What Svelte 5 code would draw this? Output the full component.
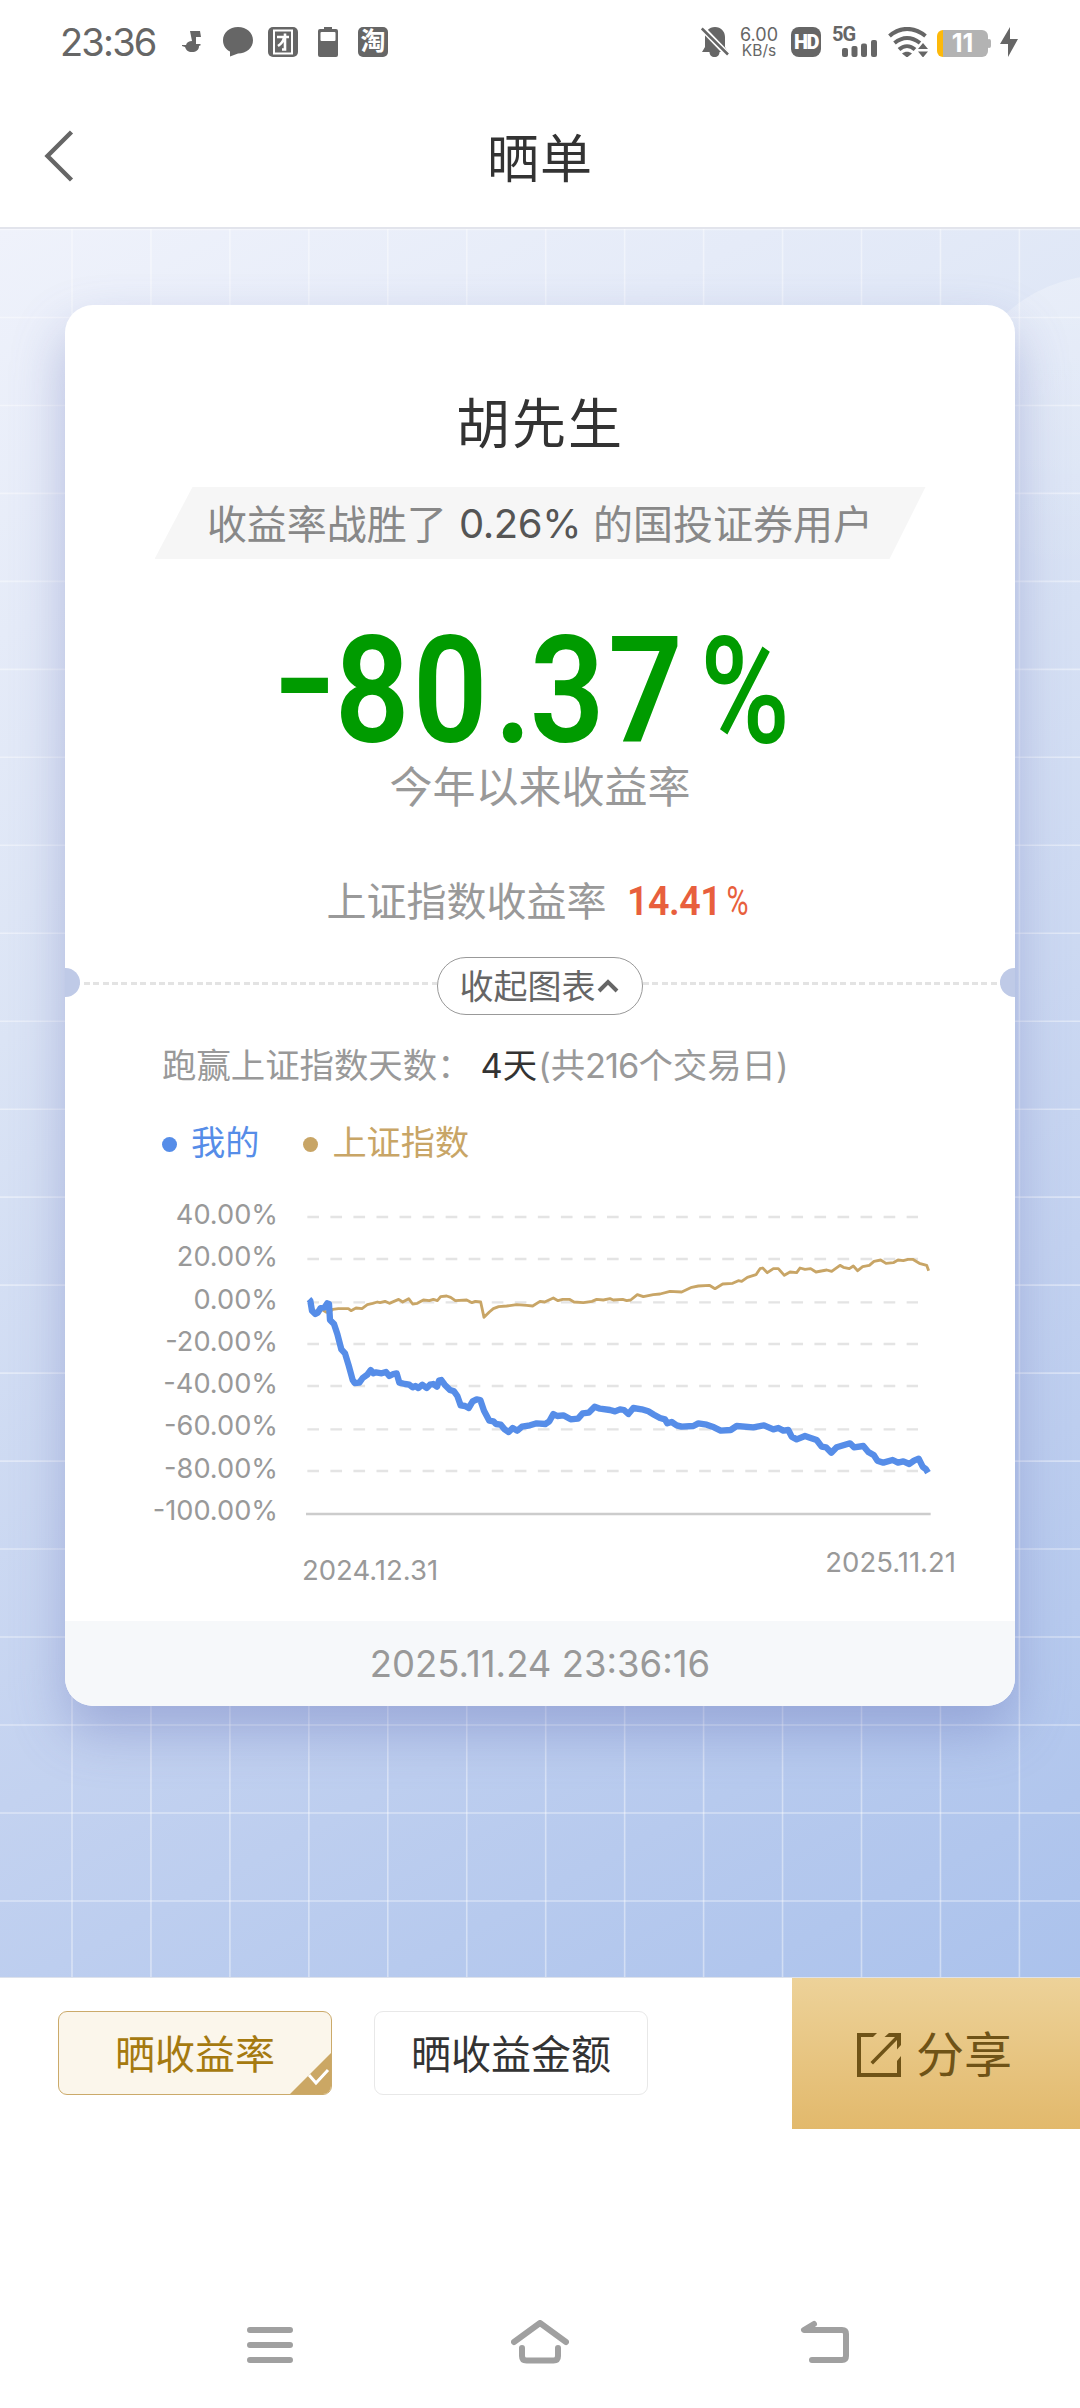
<script lang="ts">
	const axisLabels = ['40.00%', '20.00%', '0.00%', '-20.00%', '-40.00%', '-60.00%', '-80.00%', '-100.00%'];
	const gridLines = [111, 237, 367, 492, 618, 748, 873];

	const mine =
		'537,358 541,362 546,392 556,402 563,398 572,384 584,382 592,370 597,372 600,420 612,432 622,462 634,508 645,520 656,556 668,600 674,609 688,608 698,594 712,584 722,570 730,580 738,577 755,580 768,576 778,588 790,582 800,580 808,608 825,612 838,614 848,622 856,618 865,624 877,614 890,624 900,614 910,612 921,620 927,602 934,600 944,614 960,630 972,634 982,648 992,676 1005,678 1016,684 1028,664 1040,658 1051,660 1062,692 1078,722 1090,724 1098,732 1112,734 1124,748 1136,756 1148,744 1162,752 1176,740 1200,736 1220,730 1246,732 1258,724 1270,702 1282,708 1300,706 1322,718 1344,716 1358,700 1376,698 1394,680 1410,686 1440,690 1455,694 1470,688 1482,690 1495,702 1510,684 1535,688 1555,694 1572,704 1590,714 1605,718 1612,730 1625,726 1640,736 1655,740 1690,738 1705,730 1730,734 1752,742 1772,752 1802,750 1820,738 1870,742 1902,736 1930,748 1945,744 1960,752 1975,750 1985,770 2000,778 2025,768 2042,774 2060,780 2075,800 2088,802 2104,818 2120,802 2140,796 2160,790 2172,802 2200,798 2215,816 2232,826 2242,842 2260,848 2288,840 2304,848 2320,844 2338,852 2352,842 2366,836 2378,860 2388,868 2394,878';
	const index =
		'537,360 541,378 556,396 575,388 588,396 597,398 608,388 625,386 655,386 663,392 678,384 696,386 712,374 728,370 742,366 750,368 765,364 778,370 806,358 818,366 836,356 848,372 862,370 880,360 898,362 910,358 922,362 932,350 950,348 962,352 976,362 1010,360 1026,368 1036,364 1052,366 1062,412 1078,396 1090,386 1106,380 1130,378 1160,374 1190,376 1208,378 1230,364 1244,366 1270,354 1284,362 1298,358 1318,358 1332,366 1360,368 1386,364 1400,358 1420,360 1440,356 1450,360 1478,358 1490,362 1502,360 1522,344 1540,350 1570,344 1590,342 1620,334 1655,336 1685,322 1705,318 1738,316 1755,326 1778,312 1808,310 1825,302 1835,304 1852,292 1878,284 1890,266 1898,264 1912,278 1930,266 1945,266 1963,286 1980,276 2000,278 2010,264 2025,268 2042,266 2058,276 2090,270 2105,274 2130,256 2140,262 2158,266 2170,258 2183,272 2198,260 2218,256 2232,244 2252,240 2268,250 2290,248 2304,240 2320,242 2334,238 2348,238 2368,250 2390,256 2396,272';

	let mode = $state('rate');
</script>

<div class="screen">
	<div class="status">
		<div class="status-left">
			<span class="clock">23:36</span>
			<svg class="s-note" width="20" height="22" viewBox="0 0 20 22">
				<path d="M8 0h10l1 6h-5v7h4l1 1-2 1c0 4-3 6-7 6s-6-2-7-5l-3-1v-1h4c1-3 3-4 6-4z" fill="#666" />
			</svg>
			<svg class="s-bubble" width="30" height="30" viewBox="0 0 30 30">
				<path d="M15 0c8.500 0 15 5.800 15 13.200S23.500 26.500 15 26.500L7 29.500V24.500C3 22.500 0 18.500 0 13.200 0 5.800 6.500 0 15 0z" fill="#666" />
			</svg>
			<svg class="s-app" width="30" height="30" viewBox="0 0 30 30">
				<rect width="30" height="30" rx="5" fill="#666" />
				<rect x="6" y="3.500" width="18" height="23" fill="none" stroke="#fff" stroke-width="2" />
				<path d="M9 10h12M17 6.500v16h-3M16 11c-1 4-3 6-6 8" fill="none" stroke="#fff" stroke-width="2.600" />
			</svg>
			<svg class="s-cell" width="20" height="30" viewBox="0 0 20 30">
				<path d="M6 0h8v2h4a2 2 0 0 1 2 2v24a2 2 0 0 1-2 2H2a2 2 0 0 1-2-2V4a2 2 0 0 1 2-2h4z" fill="#666" />
				<rect x="2.500" y="5" width="15" height="9" rx="1" fill="#fff" />
			</svg>
			<span class="tao">淘</span>
		</div>
		<div class="status-right">
			<svg width="28" height="30" viewBox="0 0 28 30">
				<path d="M14 0c6 0 10 4.500 10 10v10l3 5H1l3-5V10C4 4.500 8 0 14 0z" fill="#666" />
				<path d="M8.500 25h10c0 3-2 5-5 5s-5-2-5-5z" fill="#666" />
				<path d="M0 0 28 29" stroke="#fff" stroke-width="6" />
				<path d="M.8 1.500 27 27.500" stroke="#666" stroke-width="2.600" />
			</svg>
			<div class="speed"><b>6.00</b><span>KB/s</span></div>
			<span class="hd">HD</span>
			<div class="signal">
				<span>5G</span>
				<svg width="35" height="17" viewBox="0 0 35 17">
					<rect x="0" y="8" width="6" height="9" rx="2" fill="#666" />
					<rect x="9.500" y="6" width="6" height="11" rx="2" fill="#666" />
					<rect x="19" y="3.500" width="6" height="13.500" rx="2" fill="#666" />
					<rect x="29" y="0" width="6" height="17" rx="2" fill="#666" />
				</svg>
			</div>
			<svg class="s-wifi" width="40" height="30" viewBox="0 0 40 30">
				<g fill="none" stroke="#666" stroke-width="4">
					<path d="M1.500 9C12-.5 26-.5 37.500 9" />
					<path d="M6.500 16c8-6.500 17-6.500 25.500 0" />
					<path d="M11 22.500c5-4.500 11-4.500 16 0" />
				</g>
				<path d="M14 26.500c3-2.500 7-2.500 10 0L19 30.500zM30 22l5-6 5 6zM30 24.500h10l-5 6z" fill="#666" />
			</svg>
			<div class="battery"><span>11</span></div>
			<svg class="s-bolt" width="18" height="30" viewBox="0 0 18 30">
				<path d="M10 0v12h8L8 30V17H0z" fill="#666" />
			</svg>
		</div>
	</div>

	<header>
		<svg class="back" width="32" height="56" viewBox="0 0 32 56">
			<path d="M28.500 4 4.500 28l24 24" fill="none" stroke="#666" stroke-width="4.400" />
		</svg>
		<h1>晒单</h1>
	</header>

	<main>
		<svg class="backdrop" width="1080" height="1748" viewBox="0 0 1080 1748">
			<defs>
				<linearGradient id="fade" x1="0" y1="0" x2="0" y2="1">
					<stop offset="0" stop-color="#fff" stop-opacity="0.28" />
					<stop offset="1" stop-color="#fff" stop-opacity="0" />
				</linearGradient>
			</defs>
			<circle cx="1106" cy="195" r="149" fill="url(#fade)" />
			{#each Array(13) as _, i}
				<line x1={72 + i * 78.95} x2={72 + i * 78.95} y1="0" y2="1748" />
			{/each}
			{#each Array(20) as _, i}
				<line x1="0" x2="1080" y1={0.5 + i * 87.97} y2={0.5 + i * 87.97} />
			{/each}
		</svg>

		<section class="card">
			<h2>胡先生</h2>
			<div class="beat">
				<span>收益率战胜了</span><b>0.26%</b><span>的国投证券用户</span>
			</div>
			<svg class="rate" width="950" height="136" viewBox="65 620 950 136">
				<text transform="translate(273 731) scale(1.17 1)" font-weight="600">-</text>
				<g transform="scale(0.88 1)">
					<text y="742" font-weight="600"><tspan x="380.500">8</tspan><tspan x="469">0</tspan><tspan x="562">.</tspan><tspan x="602">3</tspan><tspan x="691">7</tspan></text>
				</g>
				<text transform="translate(700 742) scale(0.82 1)" font-weight="500">%</text>
			</svg>
			<p class="period">今年以来收益率</p>
			<p class="index-rate"><span>上证指数收益率</span><b>14.41<i>%</i></b></p>

			<div class="tear">
				<i class="notch left"></i>
				<i class="dash"></i>
				<button class="fold">
					<span>收起图表</span>
					<svg width="22" height="14" viewBox="0 0 22 14">
						<path d="M2 12 11 3l9 9" fill="none" stroke="#666" stroke-width="4" />
					</svg>
				</button>
				<i class="dash"></i>
				<i class="notch right"></i>
			</div>

			<p class="days"><span class="days-label">跑赢上证指数天数：</span><b>4天</b><span>(共<em>216</em>个交易日)</span></p>
			<div class="legend">
				<span class="mine">我的</span>
				<span class="index">上证指数</span>
			</div>

			<div class="chart">
				<div class="y-axis">
					{#each axisLabels as label}
						<span>{label}</span>
					{/each}
				</div>
				<svg width="626" height="320" viewBox="528 60 1878 960">
					{#each gridLines as y}
						<line class="grid" x1="532" x2="2364" y1={y} y2={y} />
					{/each}
					<line class="base" x1="528" x2="2402" y1="1002" y2="1002" />
					<polyline points={index} stroke="#c8a566" stroke-width="8.500" />
					<polyline points={mine} stroke="#568de8" stroke-width="19" />
				</svg>
			</div>
			<div class="x-axis">
				<span>2024.12.31</span>
				<span class="end">2025.11.21</span>
			</div>

			<footer>2025.11.24 23:36:16</footer>
		</section>
	</main>

	<div class="actions">
		<button class="option" class:active={mode === 'rate'} onclick={() => (mode = 'rate')}>
			晒收益率
			{#if mode === 'rate'}
				<svg class="tick" width="41" height="41" viewBox="0 0 41 41">
					<path d="M41 0v41H0z" fill="#cba764" />
					<path d="M19 22l7 8 12-13" fill="none" stroke="#fff" stroke-width="3" />
				</svg>
			{/if}
		</button>
		<button class="option" class:active={mode === 'amount'} onclick={() => (mode = 'amount')}>晒收益金额</button>
		<button class="share">
			<svg width="44" height="44" viewBox="0 0 44 44">
				<path d="M20 0 16 4H4v36h36V28l4-5v21H0V0z" fill="#6f5317" />
				<path d="M27.500 4 32 0h12v12l-4 4.500V7L16 31.500 13.500 29 38 4z" fill="#6f5317" />
			</svg>
			<span>分享</span>
		</button>
	</div>

	<nav>
		<svg width="46" height="36" viewBox="0 0 46 36">
			<path d="M3 3h40M3 18h40M3 33h40" />
		</svg>
		<svg class="home" width="58" height="44" viewBox="0 0 58 44">
			<path d="M3 22 29 3l26 19M11 28v8q0 4.500 4.500 4.500h27q4.500 0 4.500-4.500v-8" />
		</svg>
		<svg class="return" width="50" height="44" viewBox="0 0 50 44">
			<path d="M14 4 4 10h38q4 0 4 4v22q0 4-4 4H12" />
		</svg>
	</nav>
</div>

<style>
	:global(body) {
		background: #fff;
	}

	.screen {
		width: 1080px;
		height: 2408px;
		display: flex;
		flex-direction: column;
		overflow: hidden;
		font-family: Inter, 'Noto Sans CJK SC', sans-serif;
		color: #333;
	}

	h1,
	h2,
	p {
		margin: 0;
		font-weight: 400;
	}

	b,
	i,
	em {
		font-weight: 400;
		font-style: normal;
	}

	button {
		font: inherit;
		padding: 0;
		border: 0;
	}

	svg {
		display: block;
		flex: none;
	}

	.status {
		height: 84px;
		display: flex;
		justify-content: space-between;
		align-items: center;
		padding: 0 62px 0 60px;
		color: #666;
	}

	.status-left,
	.status-right {
		display: flex;
		align-items: center;
	}

	.clock {
		width: 122px;
		font-size: 38px;
		line-height: 44px;
		letter-spacing: -1.8px;
	}

	.s-bubble {
		margin-left: 21px;
	}

	.s-app {
		margin-left: 15px;
	}

	.s-cell {
		margin-left: 20px;
	}

	.tao {
		width: 30px;
		height: 30px;
		margin-left: 20px;
		border-radius: 5px;
		background: #666;
		color: #fff;
		font-size: 25px;
		font-weight: 700;
		line-height: 29px;
		text-align: center;
	}

	.speed {
		width: 40px;
		margin-left: 10px;
		display: flex;
		flex-direction: column;
		align-items: center;
		font-size: 15.5px;
		line-height: 15px;
	}

	.speed b {
		font-size: 18px;
		line-height: 16px;
	}

	.hd {
		width: 30px;
		height: 30px;
		margin-left: 12px;
		border-radius: 8px;
		background: #666;
		color: #fff;
		font-family: Roboto, sans-serif;
		font-size: 20px;
		font-weight: 900;
		line-height: 30px;
		text-align: center;
		letter-spacing: -1.6px;
	}

	.signal {
		width: 45px;
		height: 30px;
		margin-left: 11px;
		display: flex;
		flex-direction: column;
		align-items: flex-end;
	}

	.signal span {
		width: 100%;
		height: 13px;
		font-family: Roboto, sans-serif;
		font-size: 20px;
		font-weight: 700;
		line-height: 14px;
		letter-spacing: -1px;
	}

	.s-wifi {
		margin-left: 11px;
	}

	.battery {
		position: relative;
		width: 51px;
		height: 27px;
		margin-left: 9px;
		margin-top: 2px;
		border-radius: 6px;
		background: linear-gradient(90deg, #fdb90b 6px, #b3b3b3 6px);
		color: #fff;
		font-size: 25px;
		font-weight: 700;
		line-height: 27px;
		text-align: center;
	}

	.battery::after {
		content: '';
		position: absolute;
		right: -3px;
		top: 9px;
		width: 4px;
		height: 9px;
		border-radius: 2px;
		background: #b3b3b3;
	}

	.s-bolt {
		margin-left: 12px;
	}

	header {
		height: 143px;
		display: flex;
		align-items: center;
		padding: 0 43px;
	}

	h1 {
		flex: 1;
		padding-right: 32px;
		padding-top: 9px;
		font-size: 52px;
		line-height: 70px;
		letter-spacing: 1px;
		text-align: center;
	}

	main {
		position: relative;
		height: 1748px;
		border-top: 2px solid #e2e4ec;
		border-bottom: 1px solid #dde2ec;
		background: linear-gradient(152deg, #eff2fb 0%, #dbe4f5 35%, #c3d2f0 68%, #abc2ec 100%);
	}

	.backdrop {
		position: absolute;
		inset: 0;
	}

	.backdrop line {
		stroke: #fff;
		stroke-opacity: 0.42;
		stroke-width: 1.6;
	}

	.card {
		position: relative;
		display: flex;
		flex-direction: column;
		width: 950px;
		height: 1401px;
		margin: 76px auto 0;
		border-radius: 28px;
		background: #fff;
		box-shadow: 0 26px 52px rgba(104, 116, 185, 0.42);
	}

	h2 {
		height: 67px;
		padding-top: 85px;
		font-size: 54px;
		line-height: 70px;
		letter-spacing: 2px;
		text-align: center;
	}

	.beat {
		width: 771px;
		height: 72px;
		margin: 30px auto 0;
		display: flex;
		justify-content: center;
		align-items: center;
		gap: 12px;
		background: #f6f6f6;
		clip-path: polygon(38px 0, 100% 0, 735px 100%, 0 100%);
		color: #888;
		font-size: 40px;
	}

	.beat span {
		padding-bottom: 3px;
	}

	.beat b {
		color: #555;
		letter-spacing: -0.4px;
	}

	.rate {
		margin-top: 61px;
		overflow: visible;
		font-family: Roboto, sans-serif;
		font-size: 149px;
		fill: #009b00;
	}

	.period {
		height: 59px;
		padding-top: 1px;
		color: #999;
		font-size: 43px;
		line-height: 60px;
		text-align: center;
	}

	.index-rate {
		height: 58px;
		margin-top: 54px;
		padding: 2px 0 0 3px;
		display: flex;
		justify-content: center;
		gap: 21px;
		color: #999;
		font-size: 40px;
		line-height: 60px;
	}

	.index-rate b {
		color: #e85f3d;
		font-family: Roboto, sans-serif;
		font-weight: 600;
		transform: scaleX(0.94);
		transform-origin: left;
		letter-spacing: -0.5px;
	}

	.index-rate i {
		display: inline-block;
		transform: scaleX(0.8);
		transform-origin: right;
	}

	.tear {
		position: relative;
		height: 58px;
		margin-top: 27px;
		display: flex;
		align-items: center;
	}

	.dash {
		flex: 1;
		height: 3px;
		margin-bottom: 5px;
		background: repeating-linear-gradient(90deg, #e3e3e3 0 6px, transparent 6px 9.4px);
	}

	.notch {
		position: absolute;
		top: 11px;
		width: 15px;
		height: 29px;
		background: #bfcae7;
	}

	.notch.left {
		left: 0;
		border-radius: 0 15px 15px 0;
	}

	.notch.right {
		right: 0;
		border-radius: 15px 0 0 15px;
	}

	.fold {
		box-sizing: border-box;
		width: 206px;
		height: 58px;
		display: flex;
		justify-content: center;
		align-items: center;
		gap: 1px;
		padding-right: 2px;
		border: 1.5px solid #999;
		border-radius: 29px;
		background: #fff;
		color: #666;
		font-size: 34px;
	}

	.fold span {
		padding-bottom: 3px;
	}

	.days {
		display: flex;
		height: 49px;
		margin-top: 26px;
		padding-left: 97px;
		color: #999;
		font-size: 34.4px;
		line-height: 50px;
	}

	.days b {
		margin-left: 9px;
		margin-right: 1px;
		color: #333;
	}

	.days em {
		letter-spacing: -1px;
	}

	.legend {
		display: flex;
		gap: 44px;
		height: 49px;
		margin-top: 28px;
		padding-left: 97px;
		font-size: 34.2px;
		line-height: 50px;
	}

	.legend span {
		display: flex;
		align-items: center;
		gap: 14px;
	}

	.legend span::before {
		content: '';
		width: 15px;
		height: 15px;
		margin-top: 4px;
		border-radius: 50%;
		background: currentColor;
	}

	.mine {
		color: #568de8;
	}

	.index {
		color: #c8a566;
	}

	.chart {
		display: flex;
		margin-top: 27px;
	}

	.y-axis {
		width: 213px;
		display: flex;
		flex-direction: column;
		align-items: flex-end;
		color: #999;
		font-size: 27.2px;
		line-height: 42.3px;
	}

	.chart svg {
		margin: 6px 0 0 28px;
	}

	.grid {
		stroke: #e4e4e4;
		stroke-width: 7;
		stroke-dasharray: 35 34.15;
	}

	.base {
		stroke: #ccc;
		stroke-width: 7;
	}

	polyline {
		fill: none;
		stroke-linejoin: round;
	}

	.x-axis {
		display: flex;
		justify-content: space-between;
		padding: 18px 59px 0 237px;
		color: #999;
		font-size: 27.5px;
		line-height: 40px;
	}

	.end {
		margin-top: -8px;
	}

	footer {
		height: 85px;
		margin-top: auto;
		border-radius: 0 0 28px 28px;
		background: #f6f8fa;
		color: #999;
		font-size: 36.5px;
		line-height: 86px;
		text-align: center;
	}

	.actions {
		height: 151px;
		display: flex;
		align-items: flex-start;
		padding-left: 58px;
	}

	.option {
		position: relative;
		box-sizing: border-box;
		width: 274px;
		height: 84px;
		margin-top: 33px;
		margin-right: 42px;
		padding-bottom: 3px;
		border: 1.5px solid #e8e8e8;
		border-radius: 9px;
		background: #fff;
		color: #333;
		font-size: 40px;
		overflow: hidden;
	}

	.option.active {
		border-color: #cbaa6a;
		background: #fbf6eb;
		color: #a57a10;
	}

	.tick {
		position: absolute;
		right: 0;
		bottom: 0;
	}

	.share {
		width: 288px;
		height: 151px;
		margin-left: auto;
		display: flex;
		align-items: center;
		justify-content: center;
		gap: 15px;
		background: linear-gradient(#edd299, #e2b96c);
		color: #6f5317;
		font-size: 48px;
	}

	.share svg {
		margin-top: 2px;
	}

	.share span {
		padding-bottom: 6px;
		margin-right: 3px;
	}

	nav {
		display: flex;
		padding: 191px 0 0 247px;
	}

	nav svg {
		margin-top: 7px;
	}

	nav path {
		fill: none;
		stroke: #a0a0a0;
		stroke-width: 6;
		stroke-linecap: round;
		stroke-linejoin: round;
	}

	nav .home {
		margin: 0 0 0 218px;
	}

	nav .return {
		margin: 0 0 0 231px;
	}
</style>
